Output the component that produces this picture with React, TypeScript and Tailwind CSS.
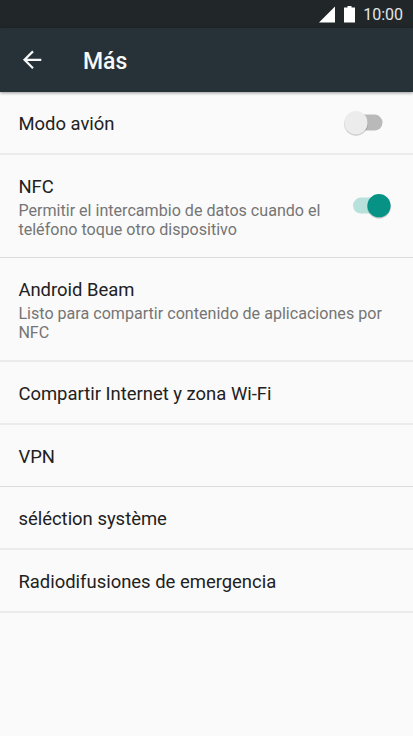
import React from 'react';

interface Setting {
  title: string;
  summary?: string;
  enabled?: boolean;
  row: string;
}

const settings: Setting[] = [
  { title: 'Modo avión', enabled: false, row: 'h-[63px] border-b-2 border-[#ebebeb]' },
  {
    title: 'NFC',
    summary: 'Permitir el intercambio de datos cuando el teléfono toque otro dispositivo',
    enabled: true,
    row: 'h-[103px] border-b border-[#dadada]',
  },
  {
    title: 'Android Beam',
    summary: 'Listo para compartir contenido de aplicaciones por NFC',
    row: 'h-[104px] border-b-2 border-[#ebebeb]',
  },
  { title: 'Compartir Internet y zona Wi-Fi', row: 'h-[63px] border-b-2 border-[#ebebeb]' },
  { title: 'VPN', row: 'h-[62px] border-b border-[#dadada]' },
  { title: 'séléction système', row: 'h-[63px] border-b-2 border-[#ebebeb]' },
  { title: 'Radiodifusiones de emergencia', row: 'h-[63px] border-b-2 border-[#ebebeb]' },
];

const StatusBar: React.FC = () => (
  <div className="flex h-7 items-center justify-end bg-[#212729] pr-[10px] text-white">
    <svg className="mr-[9px] h-[17px] w-4" viewBox="0 0 16 17" fill="currentColor">
      <path d="M16 .5v16H0z" />
    </svg>
    <svg className="mr-2 h-[17px] w-[11px]" viewBox="0 0 11 17" fill="currentColor">
      <path d="M3.5 0h4v1.6H11V16.5H0V1.6h3.5z" />
    </svg>
    <span className="pt-px text-[16px] leading-none text-[#e4e5e6]">10:00</span>
  </div>
);

const Toggle: React.FC<{ on: boolean }> = ({ on }) => (
  <svg className="h-8 w-[54px] shrink-0" viewBox="0 0 54 32">
    <rect x="12" y="7.6" width="29.5" height="16" rx="8" fill={on ? '#b8e1dc' : '#b9b9b9'} />
    <circle cx={on ? 38 : 15} cy="16.8" r="11.9" fill="#000" opacity="0.18" />
    <circle cx={on ? 38 : 15} cy="15.7" r="11.6" fill={on ? '#069386' : '#ececec'} />
  </svg>
);

export default function App() {
  return (
    <div className="flex h-[736px] w-[413px] flex-col overflow-hidden bg-[#fafafa] font-[Roboto,sans-serif]">
      <StatusBar />
      <header className="z-10 flex h-16 shrink-0 items-center bg-[#263238] pl-[22px] text-[#f7f8f8] shadow-[0_1px_3px_rgba(0,0,0,0.4)]">
        <svg className="h-5 w-5" viewBox="0 0 20 20" fill="none" stroke="currentColor" strokeWidth="2.2">
          <path d="M19.3 9.8H2.5M11 1.4L2.5 9.8l8.5 8.4" />
        </svg>
        <h1 className="ml-[41px] pt-0.5 text-[23px] font-medium leading-none">Más</h1>
      </header>
      <main>
        {settings.map(({ title, summary, enabled, row }) => (
          <section key={title} className={`flex items-center pl-[18.4px] ${row}`}>
            <div className="min-w-0 flex-1 pt-[2px] pr-[14px]">
              <h2 className="text-[18.45px] leading-[22px] text-[#212121]">{title}</h2>
              {summary && <p className="mt-[3px] text-[16.1px] leading-[19px] text-[#757575]">{summary}</p>}
            </div>
            {enabled !== undefined && (
              <div className="mr-[18px] flex">
                <Toggle on={enabled} />
              </div>
            )}
          </section>
        ))}
      </main>
    </div>
  );
}
